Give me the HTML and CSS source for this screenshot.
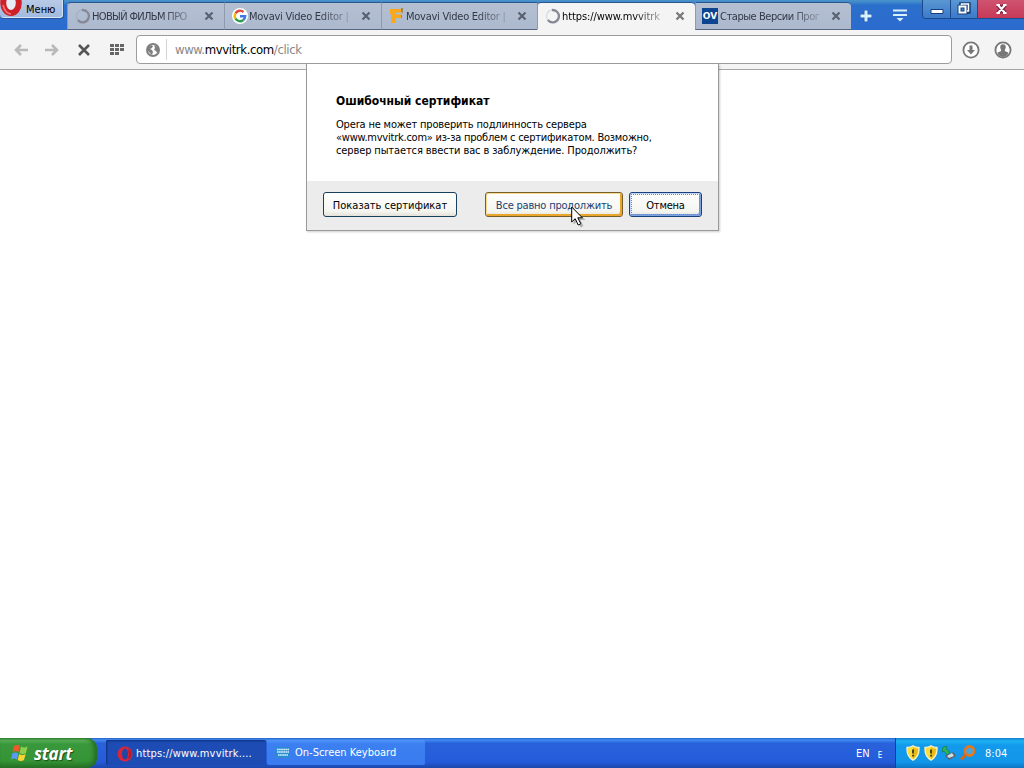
FILE: index.html
```
<!DOCTYPE html>
<html lang="ru">
<head>
  <meta charset="UTF-8">
  <title>Ошибочный сертификат</title>
  <link rel="stylesheet" href="styles.css">
</head>
<body>
  <svg class="defs" width="0" height="0">
    <symbol id="close" viewBox="0 0 10 10">
      <path d="M1.5 1.5l7 7M8.5 1.5l-7 7" stroke="currentColor" stroke-width="2.2" fill="none"/>
    </symbol>
    <symbol id="spinner" viewBox="0 0 14 14">
      <path d="M6 1.8A5.4 5.4 0 1 1 2.5 10.5" stroke="currentColor" stroke-width="2" fill="none"/>
      <path d="M2.5 10.5A5.4 5.4 0 0 1 6 1.8" stroke="currentColor" stroke-width="1" opacity=".25" fill="none"/>
    </symbol>
    <symbol id="shield" viewBox="0 0 14 16">
      <path d="M7 .8Q10 2.6 13 2.4Q13.8 11 7 15.2Q.2 11 1 2.4Q4 2.6 7 .8Z" fill="#fbdc3a" stroke="#f7f3cf" stroke-width="1.2"/>
      <path d="M7 2v12q5-4 5-10q-3 0-5-2z" fill="#e9ba18"/>
      <path d="M7 4.500v4M7 9.800v1.600" stroke="#222" stroke-width="1.600"/>
    </symbol>
  </svg>

  <!-- Tab strip -->
  <header class="titlebar">
    <button class="menu">
      <svg width="22" height="17" viewBox="0 0 22 17">
        <ellipse cx="11" cy="3" rx="7.800" ry="10" fill="#e8edf5" stroke="#cf2028" stroke-width="6"/>
        <path d="M3 5Q5 13.500 11 14" fill="none" stroke="#f0777a" stroke-width="1.600"/>
      </svg>
      <span>Меню</span>
    </button>

    <nav class="tabs">
      <div class="tab">
        <svg class="fav muted" width="16" height="16"><use href="#spinner"/></svg>
        <span class="title t1">НОВЫЙ ФИЛЬМ ПРО</span>
        <svg class="x" width="10" height="10"><use href="#close"/></svg>
      </div>
      <div class="tab">
        <svg class="fav" width="16" height="16" viewBox="0 0 16 16">
          <circle cx="8" cy="8" r="8" fill="#fff"/>
          <g fill="none" stroke-width="2.4">
            <path d="M11.500 4A5.200 5.200 0 0 0 3.500 5.300" stroke="#e04a3a"/>
            <path d="M3.500 5.300A5.200 5.200 0 0 0 3.500 10.700" stroke="#f0b90c"/>
            <path d="M3.500 10.700A5.200 5.200 0 0 0 11.300 12" stroke="#2f9e50"/>
            <path d="M11.300 12A5.200 5.200 0 0 0 13.200 8.200H8" stroke="#3f78e0"/>
          </g>
        </svg>
        <span class="title t2">Movavi Video Editor |</span>
        <svg class="x" width="10" height="10"><use href="#close"/></svg>
      </div>
      <div class="tab third">
        <svg class="fav" width="16" height="16" viewBox="0 0 16 16">
          <path d="M1 1h12v3.500H6.500v2H12V10H6.500v5H2V6L0 5h1z" fill="#f8a81a"/>
          <path d="M12 0h2v5l-2-1zM12 6.500l1 .5v3l-1 .5z" fill="#a58650"/>
        </svg>
        <span class="title t2">Movavi Video Editor |</span>
        <svg class="x" width="10" height="10"><use href="#close"/></svg>
      </div>
      <div class="tab active">
        <svg class="fav muted" width="16" height="16"><use href="#spinner"/></svg>
        <span class="title t3">https://www.mvvitrk</span>
        <svg class="x" width="10" height="10"><use href="#close"/></svg>
      </div>
      <div class="tab last">
        <span class="fav ov">OV</span>
        <span class="title t4">Старые Версии Прог</span>
        <svg class="x" width="10" height="10"><use href="#close"/></svg>
      </div>
    </nav>

    <svg class="plus" width="12" height="12"><path d="M6 0v12M0 6h12" stroke="#1e5aa8" stroke-width="4.500"/><path d="M6 .5v11M.5 6h11" stroke="#d9f0fc" stroke-width="3"/></svg>
    <svg class="tablist" width="14" height="13"><path d="M0 1.500h14M0 6h14" stroke="#d9f0fc" stroke-width="2"/><path d="M3.500 9h7L7 12.500z" fill="#d9f0fc"/></svg>

    <div class="wincontrols">
      <span class="wc"><svg width="27" height="18"><path d="M8 9.500h12v4H8z" fill="#fff" stroke="#123f7c"/></svg></span>
      <span class="wc"><svg width="26" height="18"><g fill="none"><path d="M10 6V4h8v8h-2" stroke="#123f7c" stroke-width="3.500"/><path d="M8.500 6.500h6v6h-6z" stroke="#123f7c" stroke-width="4"/><path d="M10.500 5V4h7v7H16" stroke="#fff" stroke-width="1.500"/><path d="M8.500 6.500h6v6h-6z" stroke="#fff" stroke-width="2"/></g></svg></span>
      <span class="wc wc-close"><svg width="46" height="18"><path d="M20 5l7 8M27 5l-7 8" stroke="#7d2440" stroke-width="4.500"/><path d="M20 5l7 8M27 5l-7 8M18.500 5h3.500M25 5h3.500M18.500 13h3.500M25 13h3.500" stroke="#fff" stroke-width="2"/></svg></span>
    </div>
  </header>

  <!-- Address bar -->
  <div class="toolbar">
    <svg class="nav" width="14" height="12"><path d="M14 6H2M7 1L2 6l5 5" fill="none" stroke="#b9b9b9" stroke-width="2.600"/></svg>
    <svg class="nav" width="14" height="12"><path d="M0 6h12M7 1l5 5-5 5" fill="none" stroke="#b9b9b9" stroke-width="2.600"/></svg>
    <svg class="nav stop" width="12" height="12" viewBox="0 0 12 12"><path d="M1 1l10 10M11 1L1 11" stroke="#555" stroke-width="2.600"/></svg>
    <svg class="nav grid" width="14" height="12" fill="#666">
      <path d="M0 0h4v3H0zM5 0h4v3H5zM10 0h4v3h-4zM0 4h4v3H0zM5 4h4v3H5zM10 4h4v3h-4zM0 8h4v3H0zM5 8h4v3H5z"/>
    </svg>
    <div class="address">
      <svg width="14" height="14" viewBox="0 0 14 14">
        <circle cx="7" cy="7" r="6" fill="#fff" stroke="#808080" stroke-width="2"/>
        <path d="M2 4l3-2 2 1-1 2-2 1 2 1 1 2-1 3-3-3-2-2zM8 2l4 2 1 3-2 3-1-2-2-1 1-2z" fill="#808080"/>
      </svg>
      <span class="url">www.<b>mvvitrk.com</b>/click</span>
    </div>
    <svg class="tool" width="18" height="18"><circle cx="9" cy="9" r="7.600" fill="#fff" stroke="#777" stroke-width="1.800"/><path d="M7.500 4.500h3V9H13l-4 4.500L5 9h2.500z" fill="#777"/></svg>
    <svg class="tool" width="18" height="18"><circle cx="9" cy="9" r="7.600" fill="#fff" stroke="#777" stroke-width="1.800"/><path d="M9 3.200c2.500 0 3 1.800 2.700 3.600-.2 1.300-.9 1.800-.9 2.700 0 1 3 1.300 3.900 2.500Q12.500 16 9 16T3.300 12c.9-1.200 3.900-1.500 3.900-2.500 0-.9-.7-1.400-.9-2.700C6 5 6.500 3.200 9 3.200z" fill="#777"/></svg>
  </div>

  <!-- Certificate warning -->
  <main class="page">
    <section class="dialog">
      <div class="message">
        <h1>Ошибочный сертификат</h1>
        <p>
          <span class="l1">Opera не может проверить подлинность сервера</span><br>
          <span class="l2">«www.mvvitrk.com» из-за проблем с сертификатом. Возможно,</span><br>
          <span class="l3">сервер пытается ввести вас в заблуждение. Продолжить?</span>
        </p>
      </div>
      <div class="buttons">
        <button class="btn show">Показать сертификат</button>
        <button class="btn proceed">Все равно продолжить</button>
        <button class="btn cancel">Отмена</button>
      </div>
      <svg class="cursor" width="15" height="22" viewBox="0 0 15 22">
        <path d="M2.500 2.500v16l4-3.500 3 6.500 3-1.500-3-6h5z" fill="#000" opacity=".25"/>
        <path d="M.7 1v15l3.500-3.300 3 6.300 2.600-1.200-3-6h4.600z" fill="#fff" stroke="#000"/>
      </svg>
    </section>
  </main>

  <!-- Taskbar -->
  <footer class="taskbar">
    <div class="start">
      <svg width="18" height="18" viewBox="0 0 18 18">
        <path d="M3 2q3-2 6 0L7.500 8q-3-2-6 0z" fill="#f0592a"/>
        <path d="M10 2.500q3 2 6.500 0L15 9q-3 2-6.500 0z" fill="#8ed04a"/>
        <path d="M1.300 9.500q3-2 6 0L6 15.500q-3-2-6 0z" fill="#5a9af5"/>
        <path d="M8.200 10q3 2 6.500 0L13 16q-3 2-6.300 0z" fill="#fbd334"/>
      </svg>
      <span>start</span>
    </div>
    <div class="task pressed">
      <svg width="16" height="16" viewBox="0 0 16 16"><circle cx="8" cy="8" r="7.500" fill="#d9253a"/><ellipse cx="8" cy="8" rx="3" ry="5.500" fill="#1d46a5"/><path d="M10.500 2.500q3 5.500 0 11 4-1.500 4-5.500t-4-5.500z" fill="#b01a34"/></svg>
      <span class="k1">https://www.mvvitrk....</span>
    </div>
    <div class="task">
      <svg width="14" height="12" viewBox="0 0 14 12"><rect width="14" height="11" rx="1" fill="#2d8bd0"/><path d="M1 2.500h12M1 5h12M2 8h10" stroke="#d8f4ff" stroke-width="1.600" stroke-dasharray="1.700 .4"/></svg>
      <span class="k2">On-Screen Keyboard</span>
    </div>
    <div class="lang"><span>EN</span><small>E</small></div>
    <div class="tray">
      <svg width="14" height="16"><use href="#shield"/></svg>
      <svg width="14" height="16"><use href="#shield"/></svg>
      <svg width="14" height="15" viewBox="0 0 14 15"><path d="M3 10l8-4 3 4-7 4z" fill="#59636e"/><path d="M5 10l5-3 2 3-5 2z" fill="#d5dde2"/><path d="M1 1l4-1-1 3 4 3-3 3-3-4-2 1z" fill="#2fb457" stroke="#167337" stroke-width=".6"/></svg>
      <svg width="16" height="16" viewBox="0 0 16 16"><circle cx="9.500" cy="6" r="4.600" fill="#4aa5dc" stroke="#e8771c" stroke-width="2.600"/><path d="M6 9.500L1 14.500" stroke="#d9661a" stroke-width="3"/></svg>
      <span class="clock">8:04</span>
    </div>
  </footer>
</body>
</html>
```
FILE: styles.css
```
* {
  box-sizing: border-box;
}
body {
  margin: 0;
  width: 1024px;
  height: 768px;
  overflow: hidden;
  display: flex;
  flex-direction: column;
  background: #fff;
  color: #000;
  font-family: "DejaVu Sans Condensed", "DejaVu Sans", sans-serif;
  font-stretch: condensed;
  font-size: 11px;
  white-space: nowrap;
}
button {
  font: inherit;
  color: inherit;
}
svg {
  display: block;
  flex: none;
}
.defs {
  position: absolute;
}

/* title bar */
.titlebar {
  height: 30px;
  display: flex;
  align-items: flex-start;
  background: linear-gradient(#4a94cc 0, #3a82c8 3px, #2b6fcc 5px, #2b6bce 100%);
}
.menu {
  width: 64px;
  height: 19px;
  padding: 0;
  display: flex;
  align-items: center;
  gap: 4px;
  margin-right: 3px;
  border: 1px solid #28549b;
  border-top: 0;
  border-left: 0;
  border-radius: 0 0 4px 4px;
  background: linear-gradient(#b8cbe6, #a0b9df);
  box-shadow: inset -1px -1px #d6e3f4;
}
.menu svg {
  align-self: flex-start;
}
.menu span {
  padding-top: 1px;
}
.tabs {
  display: flex;
  padding-top: 2px;
}
.tab {
  width: 157px;
  height: 28px;
  padding: 0 10px 0 7px;
  display: flex;
  align-items: center;
  background: linear-gradient(#b4bfd2, #acb9ce);
  border-top: 1px solid #2c558e;
  border-bottom: 1px solid #55657f;
  border-left: 1px solid #8d9aaf;
  color: #333946;
}
.tab:first-child {
  border-radius: 4px 0 0 0;
}
.tab.third {
  width: 156px;
}
.tab.last {
  width: 156px;
  padding-left: 6px;
  border-radius: 0 4px 0 0;
}
.tab.active {
  width: 158px;
  background: #f4f4f4;
  border-bottom-color: #f4f4f4;
  border-radius: 4px 4px 0 0;
  color: #000;
}
.tab .fav {
  margin-right: 1px;
}
.muted {
  color: #868995;
}
.title {
  width: 104px;
  -webkit-mask-image: linear-gradient(90deg, #000 68%, rgba(0, 0, 0, 0.15));
  mask-image: linear-gradient(90deg, #000 68%, rgba(0, 0, 0, 0.15));
}
.t1 {
  letter-spacing: -0.65px;
}
.t2 {
  letter-spacing: -0.25px;
}
.t3 {
  letter-spacing: -0.1px;
}
.t4 {
  padding-left: 1px;
  letter-spacing: -0.45px;
}
.x {
  margin-left: auto;
  color: #5a6271;
}
.active .x {
  color: #777;
}
.ov {
  width: 16px;
  height: 16px;
  background: #0d4590;
  color: #fff;
  font: bold 9px/16px "DejaVu Sans", sans-serif;
  text-align: center;
}
.plus {
  margin: 10px 0 0 9px;
}
.tablist {
  margin: 9px 0 0 21px;
}
.wincontrols {
  display: flex;
  margin-left: auto;
  height: 19px;
  border: 1px solid #1b4b8d;
  border-width: 0 0 1px 1px;
  border-radius: 0 0 0 4px;
  overflow: hidden;
}
.wc {
  background: linear-gradient(#5a97d2, #3c7acb);
  border-right: 1px solid #1b4b8d;
}
.wc-close {
  background: linear-gradient(#d05370, #c63a56);
  border-right: 0;
}

/* toolbar */
.toolbar {
  height: 40px;
  padding: 0 11px 0 14px;
  display: flex;
  align-items: center;
  background: #f4f4f4;
  border-bottom: 1px solid #a6a6a6;
}
.nav {
  margin-right: 17px;
}
.nav.stop {
  margin: 0 20px 0 2px;
}
.nav.grid {
  margin-right: 12px;
}
.address {
  width: 816px;
  height: 29px;
  margin-right: 10px;
  padding-left: 9px;
  display: flex;
  align-items: center;
  background: #fff;
  border: 1px solid #9c9c9c;
  border-radius: 4px;
}
.url {
  margin-left: 6px;
  padding-left: 8px;
  border-left: 1px solid #d4d4d4;
  line-height: 21px;
  font-size: 13px;
  letter-spacing: -0.38px;
  color: #888;
}
.url b {
  font-weight: normal;
  color: #000;
}
.tool {
  margin-right: 14px;
}
.tool:last-child {
  margin-right: 0;
}

/* dialog */
.page {
  flex: 1;
  position: relative;
}
.dialog {
  position: absolute;
  left: 306px;
  top: -6px;
  width: 413px;
  height: 167px;
  background: #fff;
  border: 1px solid #9a9a9a;
  border-top: 0;
  box-shadow: 1px 1px 2px rgba(0, 0, 0, 0.2);
}
.message {
  height: 117px;
  padding: 28px 29px 0;
}
.message h1 {
  margin: 0;
  font-size: 12px;
  line-height: 18px;
}
.message p {
  margin: 8px 0 0;
  line-height: 13px;
}
.l1 {
  letter-spacing: -0.17px;
}
.l2 {
  letter-spacing: -0.23px;
}
.l3 {
  letter-spacing: -0.12px;
}
.buttons {
  height: 49px;
  padding: 11px 16px 0;
  display: flex;
  background: #ececec;
}
.btn {
  height: 25px;
  padding: 1px 0 0;
  border: 1px solid #17405f;
  border-radius: 3px;
  background: linear-gradient(#fff, #f5f5f0 80%, #e2e0d8);
}
.show {
  width: 134px;
  margin-right: 28px;
}
.proceed {
  width: 138px;
  margin-right: 6px;
  color: #1b3f73;
  letter-spacing: -0.2px;
  border-color: #74602d;
  box-shadow: inset 1px 1px #fad98e, inset -2px -2px #eaa52c;
}
.cancel {
  width: 73px;
  letter-spacing: -0.2px;
  border-color: #17407c;
  box-shadow: inset 1px 1px #c0d6f8, inset -2px -2px #7da2df;
  outline: 1px dotted #7088ac;
  outline-offset: -3px;
}
.cursor {
  position: absolute;
  left: 264px;
  top: 142px;
}

/* taskbar */
.taskbar {
  height: 30px;
  display: flex;
  background: linear-gradient(#2a62c8 0, #3f8cf3 2px, #2a62dc 5px, #245bda 80%, #1c47ab);
  color: #fff;
}
.start {
  width: 97px;
  padding-left: 11px;
  margin-right: 9px;
  display: flex;
  align-items: center;
  gap: 5px;
  border-radius: 0 10px 10px 0;
  background: linear-gradient(#3a8a3a 0, #5cb55a 2px, #3a983c 6px, #359435 75%, #267326);
  box-shadow: inset -3px 0 4px #246b26;
  font: italic bold 17px "Open Sans", sans-serif;
  letter-spacing: -0.2px;
  text-shadow: 1px 1px 1px #1d4d1d;
}
.task {
  width: 158px;
  height: 25px;
  margin-top: 2px;
  padding-left: 9px;
  display: flex;
  align-items: center;
  gap: 5px;
  border-radius: 2px;
  background: linear-gradient(#5095fa, #3b7ff0 4px, #3a7cf0);
}
.task.pressed {
  width: 160px;
  margin-right: 1px;
  padding: 2px 0 0 11px;
  gap: 3px;
  background: #1d4db4;
  box-shadow: inset 1px 1px 2px #10307c;
}
.k1 {
  letter-spacing: 0.16px;
}
.lang {
  margin-left: auto;
  width: 39px;
  display: flex;
  align-items: center;
  gap: 8px;
}
.lang small {
  font-size: 8px;
  margin-top: 5px;
}
.tray {
  width: 129px;
  padding-left: 10px;
  display: flex;
  align-items: center;
  gap: 4px;
  border-left: 1px solid #123f9e;
  background: linear-gradient(#1280d0 0, #1db2f4 3px, #129aec 7px, #1296ea 80%, #0e76c4);
}
.clock {
  margin-left: 5px;
}
```
